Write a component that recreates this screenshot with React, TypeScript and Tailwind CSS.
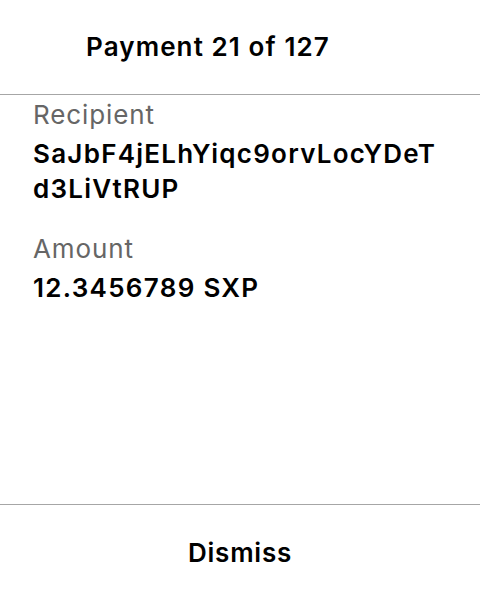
export default function App() {
  return (
    <div className="w-[480px] h-[600px] bg-white flex flex-col text-black" style={{ fontFamily: 'Inter, "Noto Sans", sans-serif' }}>
      <div className="h-[95px] border-b border-[#a6a6a6] flex items-center pl-[86px]">
        <span className="text-[26px] font-semibold leading-none tracking-[1.1px]">Payment 21 of 127</span>
      </div>
      <div className="flex-1 pl-[33px] pr-[20px] pt-[2px]">
        <div className="text-[26px] text-[#666666] leading-[35px] tracking-[0.9px]">Recipient</div>
        <div className="text-[26px] font-semibold leading-[35px] tracking-[1.25px] mt-[4px]">
          SaJbF4jELhYiqc9orvLocYDeT
          <br />
          d3LiVtRUP
        </div>
        <div className="text-[26px] text-[#666666] leading-[35px] tracking-[0.9px] mt-[25px]">Amount</div>
        <div className="text-[26px] font-semibold leading-[35px] tracking-[1.3px] mt-[4px]">12.3456789 SXP</div>
      </div>
      <div className="h-[96px] border-t border-[#a6a6a6] flex items-center justify-center">
        <span className="text-[26px] font-semibold tracking-[0.8px]">Dismiss</span>
      </div>
    </div>
  );
}
